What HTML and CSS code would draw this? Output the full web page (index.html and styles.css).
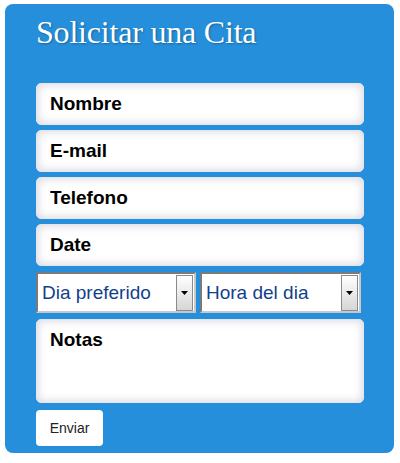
FILE: index.html
```html
<!DOCTYPE html>
<html lang="es">
  <head>
    <meta charset="UTF-8" />
    <meta name="viewport" content="width=device-width, initial-scale=1.0" />
    <title>Solicitar una Cita</title>
    <link rel="stylesheet" href="styles.css">
  </head>
  <body>
    <div class="panel">
      <h1>Solicitar una Cita</h1>
      <form class="form">
        <input type="text" placeholder="Nombre" />
        <input type="email" placeholder="E-mail" />
        <input type="tel" placeholder="Telefono" />
        <input type="text" placeholder="Date" />
        <div class="selects">
          <div class="select">
            <select>
              <option>Dia preferido</option>
            </select>
            <span class="arrow">
              <svg width="7" height="4" viewBox="0 0 7 4"><path d="M0 0h7L3.5 4z" fill="#000" /></svg>
            </span>
          </div>
          <div class="select">
            <select>
              <option>Hora del dia</option>
            </select>
            <span class="arrow">
              <svg width="7" height="4" viewBox="0 0 7 4"><path d="M0 0h7L3.5 4z" fill="#000" /></svg>
            </span>
          </div>
        </div>
        <textarea placeholder="Notas"></textarea>
        <button type="button">Enviar</button>
      </form>
    </div>
  </body>
</html>
```

FILE: styles.css
```css
* {
  box-sizing: border-box;
  margin: 0;
  padding: 0;
}
body {
  background-color: #ffffff;
  padding: 4px 6px 0 5px;
  font-family: "Liberation Sans", Arial, sans-serif;
}
.panel {
  width: 389px;
  height: 449px;
  background-color: #258fdb;
  border-radius: 8px;
  padding: 10px 29px 0 31px;
}
h1 {
  font-family: "Liberation Serif", "Times New Roman", serif;
  font-weight: normal;
  font-size: 32px;
  line-height: 36px;
  color: #ffffff;
  letter-spacing: -0.2px;
  text-shadow: 1px 1px 2px rgba(0, 0, 0, 0.3);
}
.form {
  display: flex;
  flex-direction: column;
  align-items: flex-start;
  margin-top: 33px;
}
input,
textarea {
  width: 328px;
  height: 42px;
  margin-bottom: 5px;
  border: 1px solid #e4e6ee;
  border-radius: 5px;
  background-color: #ffffff;
  box-shadow: inset 0 0 10px rgba(90, 90, 130, 0.28);
  padding: 0 13px;
  font-family: "Liberation Sans", Arial, sans-serif;
  font-size: 19px;
  font-weight: bold;
  color: #000000;
  outline: none;
}
input::placeholder,
textarea::placeholder {
  color: #000000;
  opacity: 1;
}
.selects {
  display: flex;
  gap: 4px;
  margin: 1px 0 6px 0;
}
.select {
  display: flex;
  align-items: center;
  width: 160px;
  height: 41px;
  background-color: #ffffff;
  border: 2px solid;
  border-color: #7a7a7a #c8c8c8 #c8c8c8 #7a7a7a;
  padding-right: 1px;
}
.select:last-child {
  width: 161px;
}
.select select {
  flex: 1;
  min-width: 0;
  height: 100%;
  appearance: none;
  border: none;
  background: transparent;
  padding-left: 4px;
  font-family: "Liberation Sans", Arial, sans-serif;
  font-size: 19px;
  color: #123f8c;
  outline: none;
}
.arrow {
  display: flex;
  align-items: center;
  justify-content: center;
  width: 17px;
  height: 36px;
  border: 1px solid #8a8a8a;
  background: linear-gradient(#ffffff, #d6d6d6);
}
textarea {
  height: 84px;
  padding-top: 9px;
  resize: none;
  margin-bottom: 7px;
}
button {
  width: 67px;
  height: 36px;
  border: none;
  border-radius: 4px;
  background-color: #ffffff;
  font-family: "Liberation Sans", Arial, sans-serif;
  font-size: 14px;
  color: #222222;
  cursor: pointer;
}
```
